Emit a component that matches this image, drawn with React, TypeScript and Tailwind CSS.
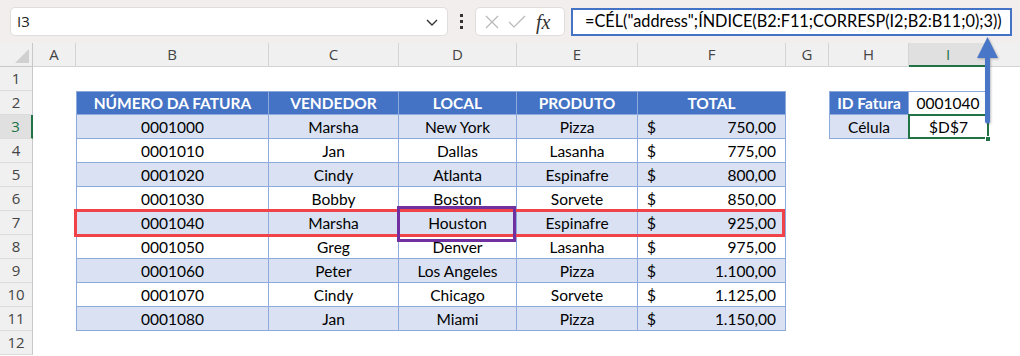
import React from 'react'

const COLS = ['A', 'B', 'C', 'D', 'E', 'F', 'G', 'H', 'I', 'J']

const invoices = [
  ['0001000', 'Marsha', 'New York', 'Pizza', '750,00'],
  ['0001010', 'Jan', 'Dallas', 'Lasanha', '775,00'],
  ['0001020', 'Cindy', 'Atlanta', 'Espinafre', '800,00'],
  ['0001030', 'Bobby', 'Boston', 'Sorvete', '850,00'],
  ['0001040', 'Marsha', 'Houston', 'Espinafre', '925,00'],
  ['0001050', 'Greg', 'Denver', 'Lasanha', '975,00'],
  ['0001060', 'Peter', 'Los Angeles', 'Pizza', '1.100,00'],
  ['0001070', 'Cindy', 'Chicago', 'Sorvete', '1.125,00'],
  ['0001080', 'Jan', 'Miami', 'Pizza', '1.150,00'],
]

const headers = ['NÚMERO DA FATURA', 'VENDEDOR', 'LOCAL', 'PRODUTO', 'TOTAL']

const cellFont = "font-['Lato','Liberation_Sans',sans-serif] text-[15.5px]"
const uiFont = "font-['Open_Sans','Noto_Sans',sans-serif]"

function TopBar() {
  return (
    <div className="flex h-[43px] items-center bg-[#f2eeee] pl-[10px]">
      <div className="flex h-[29px] w-[438px] items-center justify-between rounded-[5px] border border-[#e2dddd] bg-white pl-[6px] pr-[8px]">
        <span className={`${uiFont} text-[15px] text-[#222]`}>I3</span>
        <svg width="14" height="10" viewBox="0 0 14 10">
          <path d="M2 3 L7 8 L12 3" fill="none" stroke="#333" strokeWidth="1.4" />
        </svg>
      </div>
      <div className="flex w-[27px] flex-col items-center justify-center gap-[3px]">
        <span className="h-[3px] w-[3px] bg-[#333]" />
        <span className="h-[3px] w-[3px] bg-[#333]" />
        <span className="h-[3px] w-[3px] bg-[#333]" />
      </div>
      <div className="flex h-[29px] w-[90px] items-center rounded-[5px] border border-[#e2dddd] bg-white pl-[8px]">
        <svg width="16" height="16" viewBox="0 0 16 16">
          <path d="M2 2 L14 14 M14 2 L2 14" stroke="#b8b8b8" strokeWidth="1.2" />
        </svg>
        <svg width="18" height="16" viewBox="0 0 18 16" className="ml-[8px]">
          <path d="M1 8 L6 13 L17 2" fill="none" stroke="#b8b8b8" strokeWidth="1.2" />
        </svg>
        <span className="ml-[10px] font-['Liberation_Serif',serif] text-[20px] italic leading-none text-[#333]">
          fx
        </span>
      </div>
      <div className="ml-[6px] flex h-[28px] w-[441px] items-center border-2 border-[#4472c4] bg-white pl-[12px]">
        <span className="font-['Lato','Liberation_Sans',sans-serif] text-[16.3px] text-black">
          =CÉL("address";ÍNDICE(B2:F11;CORRESP(I2;B2:B11;0);3))
        </span>
      </div>
    </div>
  )
}

function Cell({ row, col }: { row: number; col: number }) {
  // col 0 = A ... col 9 = J
  const tableRow = row >= 2 && row <= 11 && col >= 1 && col <= 5
  const border = 'border-r border-b border-[#8ea9db]'

  if (tableRow) {
    const extra = `${col === 1 ? 'border-l' : ''} ${row === 2 ? 'border-t' : ''}`
    if (row === 2) {
      return (
        <div
          className={`${cellFont} ${border} ${extra} flex items-center justify-center bg-[#4472c4] pt-[1px] font-bold text-white`}
        >
          {headers[col - 1]}
        </div>
      )
    }
    const data = invoices[row - 3]
    const bg = row % 2 === 1 ? 'bg-[#d9e1f2]' : 'bg-white'
    if (col === 5) {
      return (
        <div className={`${cellFont} ${border} ${extra} ${bg} flex items-center justify-between px-[9px] pt-[2px] text-black`}>
          <span>$</span>
          <span>{data[4]}</span>
        </div>
      )
    }
    return (
      <div className={`${cellFont} ${border} ${extra} ${bg} flex items-center justify-center pt-[2px] text-black`}>
        {data[col - 1]}
      </div>
    )
  }

  if (row === 2 && col === 7) {
    return (
      <div className={`${cellFont} ${border} border-l border-t flex items-center justify-center bg-[#4472c4] pt-[1px] font-bold text-white`}>
        ID Fatura
      </div>
    )
  }
  if (row === 2 && col === 8) {
    return (
      <div className={`${cellFont} ${border} border-t flex items-center justify-center bg-white pt-[2px] text-black`}>
        0001040
      </div>
    )
  }
  if (row === 3 && col === 7) {
    return (
      <div className={`${cellFont} ${border} border-l flex items-center justify-center bg-[#d9e1f2] pt-[2px] text-black`}>
        Célula
      </div>
    )
  }
  if (row === 3 && col === 8) {
    return (
      <div className={`${cellFont} relative flex items-center justify-center bg-white pt-[2px] text-black`}>
        $D$7
        <div className="absolute -top-[1px] -left-[1px] -right-[1px] bottom-0 border-2 border-[#217346]" />
        <div className="absolute -right-[3px] -bottom-[3px] h-[6px] w-[6px] border border-white bg-[#217346]" />
      </div>
    )
  }
  return <div className="bg-white" />
}

export default function App() {
  const rows = Array.from({ length: 12 }, (_, i) => i + 1)

  return (
    <div className="relative h-[356px] w-[1020px] overflow-hidden bg-white">
      <TopBar />
      <div className="grid grid-cols-[33px_43px_193px_130px_118px_121px_148px_43px_80px_79px_1fr] grid-rows-[24px_repeat(12,24px)]">
        {/* column headers */}
        <div className="relative border-r border-b border-[#c8c8c8] bg-[#f0f0f0]">
          <div className="absolute right-[3px] bottom-[3px] h-0 w-0 border-b-[14px] border-l-[14px] border-b-[#d0d0d0] border-l-transparent" />
        </div>
        {COLS.map((c) => (
          <div
            key={c}
            className={`${uiFont} flex items-center justify-center text-[15px] ${
              c === 'I'
                ? 'border-r border-b-2 border-r-[#d4d4d4] border-b-[#217346] bg-[#e0e0e0] text-[#217346]'
                : 'border-r border-b border-[#d4d4d4] bg-[#f0f0f0] text-[#444]'
            } ${c === 'J' ? 'border-r-0' : ''}`}
          >
            {c === 'J' ? '' : c}
          </div>
        ))}

        {rows.map((r) => (
          <React.Fragment key={r}>
            <div
              className={`${uiFont} flex items-center justify-center border-b border-b-[#dcdcdc] text-[15px] ${
                r === 3
                  ? 'border-r-2 border-r-[#217346] bg-[#e0e0e0] text-[#217346]'
                  : 'border-r border-r-[#c8c8c8] bg-[#f0f0f0] text-[#444]'
              }`}
            >
              {r}
            </div>
            {COLS.map((c, ci) => (
              <Cell key={c} row={r} col={ci} />
            ))}
          </React.Fragment>
        ))}
      </div>

      {/* annotations */}
      <div className="pointer-events-none absolute top-[209px] left-[74px] h-[28px] w-[711px] border-[3px] border-[#ef4349]" />
      <div className="pointer-events-none absolute top-[206px] left-[397px] h-[36px] w-[119px] border-[3px] border-[#7030a0]" />
      <svg
        className="pointer-events-none absolute top-0 left-0 drop-shadow-[1px_1px_1px_rgba(0,0,0,0.25)]"
        width="1020"
        height="356"
      >
        <line x1="987.5" y1="56" x2="987.5" y2="121" stroke="#4a76c8" strokeWidth="5" strokeLinecap="round" />
        <polygon points="987.5,37 977,58 998,58" fill="#4a76c8" />
      </svg>
    </div>
  )
}
